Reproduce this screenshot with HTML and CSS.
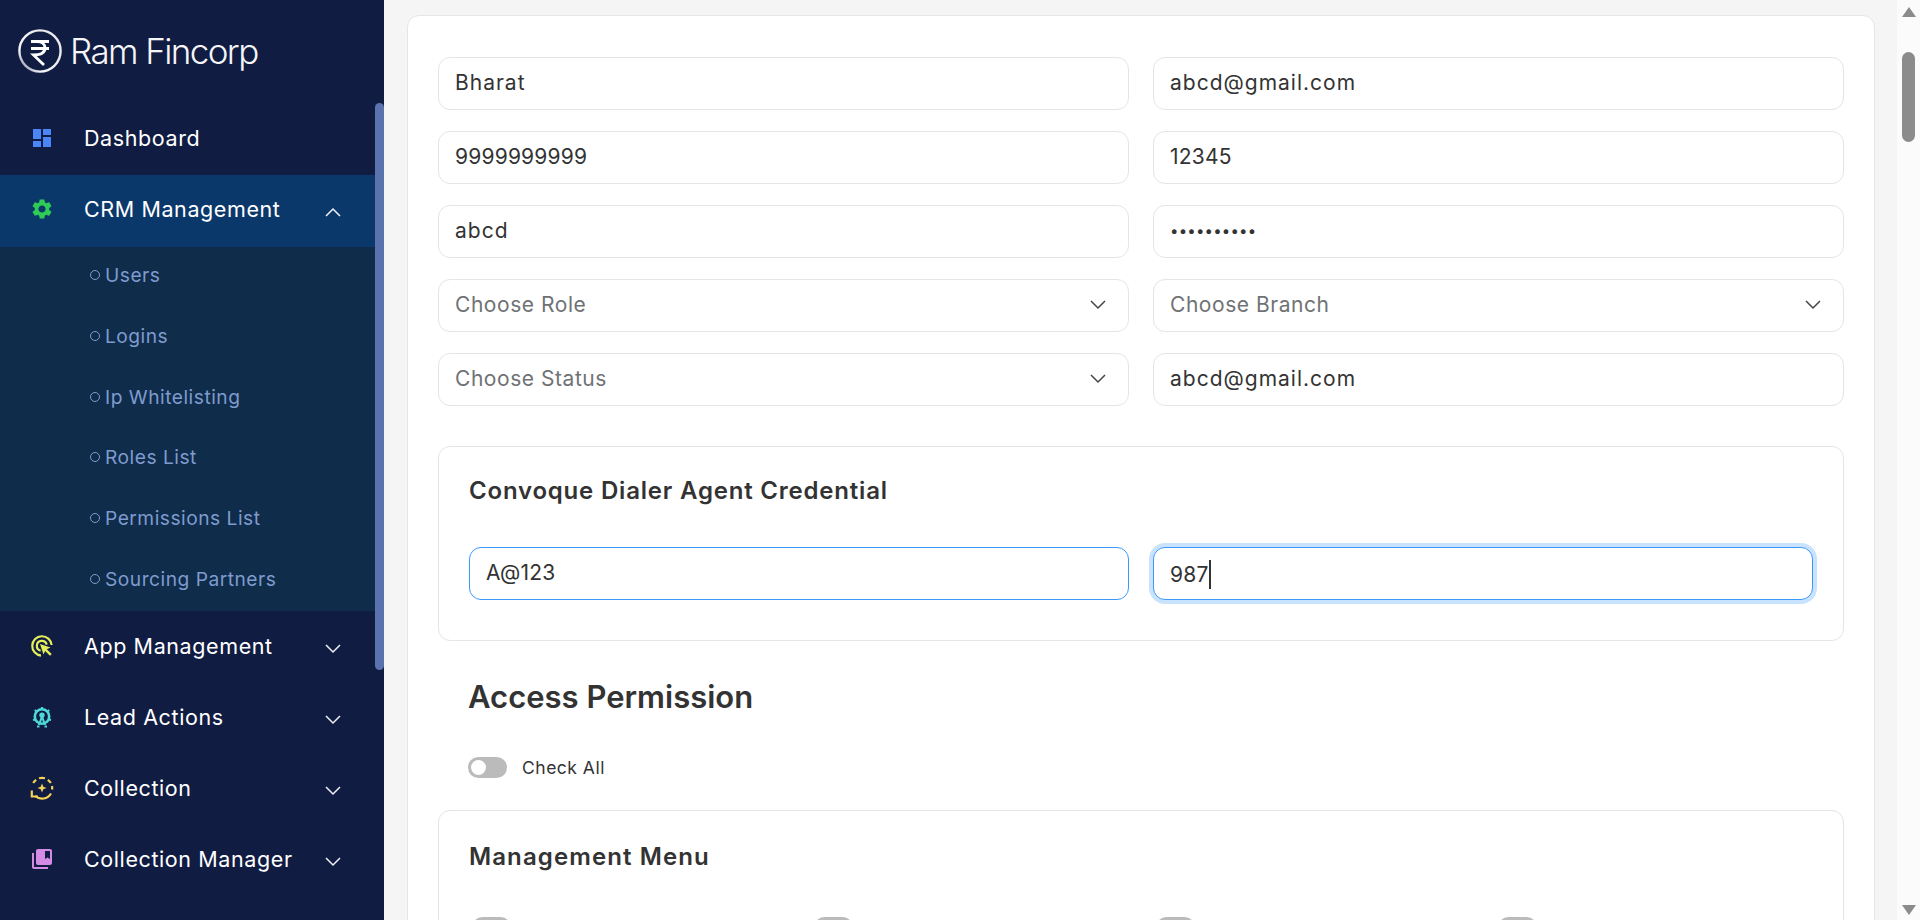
FILE: index.html
```html
<!DOCTYPE html>
<html lang="en">
<head>
<meta charset="utf-8">
<title>Ram Fincorp</title>
<link rel="stylesheet" href="styles.css">
</head>
<body>
<div class="app">
  <aside class="sidebar">
    <div class="side-col">
      <div class="brand">
        <svg class="brand-mark" width="46" height="46" viewBox="0 0 46 46" aria-hidden="true">
          <defs><linearGradient id="ring" x1="0" y1="1" x2="1" y2="0"><stop offset="0" stop-color="#5b6480"/><stop offset=".25" stop-color="#f4f4f6"/><stop offset="1" stop-color="#e6e6ea"/></linearGradient></defs>
          <circle cx="23" cy="23" r="20.600" fill="none" stroke="url(#ring)" stroke-width="2.400"/>
          <path d="M14 13.500H32M14 20.500H32M20 13.500C25 13.500 28 16 28 20C28 24.500 24.500 27 16.500 27L27 37" fill="none" stroke="#fff" stroke-width="2.800"/>
        </svg>
        <span class="brand-name">Ram Fincorp</span>
      </div>
      <nav>
        <a class="nav-row">
          <svg class="nav-ico ico-blue" viewBox="0 0 24 24"><path d="M3 13h8V3H3v10zm0 8h8v-6H3v6zm10 0h8V11h-8v10zm0-18v6h8V3h-8z"/></svg>
          <span class="nav-text">Dashboard</span>
        </a>
        <a class="nav-row nav-active">
          <svg class="nav-ico ico-green" viewBox="0 0 24 24"><path d="M19.14 12.94c.04-.3.06-.61.06-.94 0-.32-.02-.64-.07-.94l2.03-1.58c.18-.14.23-.41.12-.61l-1.92-3.32c-.12-.22-.37-.29-.59-.22l-2.39.96c-.5-.38-1.03-.7-1.62-.94l-.36-2.54c-.04-.24-.24-.41-.48-.41h-3.84c-.24 0-.43.17-.47.41l-.36 2.54c-.59.24-1.13.57-1.62.94l-2.39-.96c-.22-.08-.47 0-.59.22L2.74 8.87c-.12.21-.08.47.12.61l2.03 1.58c-.05.3-.09.63-.09.94s.02.64.07.94l-2.03 1.58c-.18.14-.23.41-.12.61l1.92 3.32c.12.22.37.29.59.22l2.39-.96c.5.38 1.03.7 1.62.94l.36 2.54c.05.24.24.41.48.41h3.84c.24 0 .44-.17.47-.41l.36-2.54c.59-.24 1.13-.56 1.62-.94l2.39.96c.22.08.47 0 .59-.22l1.92-3.32c.12-.22.07-.47-.12-.61l-2.01-1.58zM12 15.6c-1.98 0-3.6-1.62-3.6-3.6s1.62-3.6 3.6-3.6 3.6 1.62 3.6 3.6-1.62 3.6-3.6 3.6z"/></svg>
          <span class="nav-text">CRM Management</span>
          <svg class="nav-chev" viewBox="0 0 16 10"><path d="M1 9L8 2L15 9"/></svg>
        </a>
        <ul class="sub-list">
          <li class="sub-item">Users</li>
          <li class="sub-item">Logins</li>
          <li class="sub-item">Ip Whitelisting</li>
          <li class="sub-item">Roles List</li>
          <li class="sub-item">Permissions List</li>
          <li class="sub-item">Sourcing Partners</li>
        </ul>
        <a class="nav-row">
          <svg class="nav-ico ico-stroke ico-yellow" viewBox="0 0 24 24"><path d="M11 21.600A9.700 9.700 0 1 1 21.600 11"/><path d="M10.600 16.700A5 5 0 1 1 16.700 10.600"/><path class="ico-fill" d="M10 10L20.500 13.500L16.800 15.200L21.700 20.100L20 21.800L15.100 16.900L13.500 20.500Z"/></svg>
          <span class="nav-text">App Management</span>
          <svg class="nav-chev" viewBox="0 0 16 10"><path d="M1 1L8 8L15 1"/></svg>
        </a>
        <a class="nav-row">
          <svg class="nav-ico ico-stroke ico-cyan" viewBox="0 0 24 24"><circle cx="12" cy="11.500" r="7.200" stroke-width="2.600"/><path class="ico-fill" d="M12 7.500a2.700 2.700 0 0 1 2.700 2.700c0 1-.5 1.800-1.200 2.300L16 20h-2.200l-1.800-5.500L10.200 20H8l2.500-7.500c-.7-.5-1.200-1.300-1.200-2.300A2.700 2.700 0 0 1 12 7.500Z"/><path d="M12 2V4.500M4.800 5L6.500 6.500M19.200 5L17.500 6.500M3 15L5.500 14.500M21 15L18.500 14.500M7 21.500H9.500M14.500 21.500H17"/></svg>
          <span class="nav-text">Lead Actions</span>
          <svg class="nav-chev" viewBox="0 0 16 10"><path d="M1 1L8 8L15 1"/></svg>
        </a>
        <a class="nav-row">
          <svg class="nav-ico ico-stroke ico-gold" viewBox="0 0 24 24"><path d="M9 2.300A10.300 10.300 0 0 1 15 2.300"/><path d="M17.800 3.800A10.300 10.300 0 0 1 20.800 7"/><path d="M3.200 7A10.300 10.300 0 0 1 6.200 3.800"/><path d="M22 10A10.300 10.300 0 0 1 22.100 13.500"/><path d="M21 17.500A10.300 10.300 0 0 1 5.200 20"/><path d="M1.800 14.500V20.500H8"/><path class="ico-fill" d="M12 7.500L13.300 10.700L16.500 12L13.300 13.300L12 16.500L10.700 13.300L7.500 12L10.700 10.700Z"/></svg>
          <span class="nav-text">Collection</span>
          <svg class="nav-chev" viewBox="0 0 16 10"><path d="M1 1L8 8L15 1"/></svg>
        </a>
        <a class="nav-row">
          <svg class="nav-ico ico-purple" viewBox="0 0 24 24"><path d="M4 6H2v14c0 1.100.9 2 2 2h14v-2H4V6zm16-4H8c-1.100 0-2 .9-2 2v12c0 1.100.9 2 2 2h12c1.100 0 2-.9 2-2V4c0-1.100-.9-2-2-2zm0 10l-2.500-1.500L15 12V4h5v8z"/></svg>
          <span class="nav-text">Collection Manager</span>
          <svg class="nav-chev" viewBox="0 0 16 10"><path d="M1 1L8 8L15 1"/></svg>
        </a>
      </nav>
    </div>
    <div class="side-rail"><div class="side-thumb"></div></div>
  </aside>

  <main class="main">
    <section class="card">
      <div class="field-grid">
        <input class="field" type="text" value="Bharat">
        <input class="field" type="text" value="abcd@gmail.com">
        <input class="field field-num" type="text" value="9999999999">
        <input class="field field-num" type="text" value="12345">
        <input class="field" type="text" value="abcd">
        <input class="field field-dots" type="password" value="abcdefghij">
        <div class="select-wrap">
          <select class="field field-select"><option>Choose Role</option></select>
          <svg class="select-chev" viewBox="0 0 16 10"><path d="M1 1L8 8L15 1"/></svg>
        </div>
        <div class="select-wrap">
          <select class="field field-select"><option>Choose Branch</option></select>
          <svg class="select-chev" viewBox="0 0 16 10"><path d="M1 1L8 8L15 1"/></svg>
        </div>
        <div class="select-wrap">
          <select class="field field-select"><option>Choose Status</option></select>
          <svg class="select-chev" viewBox="0 0 16 10"><path d="M1 1L8 8L15 1"/></svg>
        </div>
        <input class="field" type="text" value="abcd@gmail.com">
      </div>

      <section class="panel panel-dialer">
        <h3 class="panel-title">Convoque Dialer Agent Credential</h3>
        <div class="field-grid">
          <input class="field field-blue field-num" type="text" value="A@123">
          <div class="field field-blue field-focus field-num"><span class="caret-text">987</span></div>
        </div>
      </section>

      <h2 class="section-title">Access Permission</h2>
      <div class="check-all">
        <span class="toggle"></span>
        <span class="check-label">Check All</span>
      </div>

      <section class="panel panel-menu">
        <h3 class="panel-title">Management Menu</h3>
        <div class="toggle-row">
          <span class="toggle"></span>
          <span class="toggle"></span>
          <span class="toggle"></span>
          <span class="toggle"></span>
        </div>
      </section>
    </section>
  </main>

  <div class="page-scroll" aria-hidden="true">
    <span class="arrow-up"></span>
    <span class="page-thumb"></span>
    <span class="arrow-down"></span>
  </div>
</div>
</body>
</html>
```

FILE: styles.css
```css
* { box-sizing: border-box; }
html, body { margin: 0; height: 100%; overflow: hidden; }
body {
  font-family: Inter, "Noto Sans", "Liberation Sans", sans-serif;
  color: #333;
  background: #f5f5f5;
}
.app { display: flex; height: 920px; overflow: hidden; }

/* Sidebar */
.sidebar { width: 384px; flex: none; display: flex; background: #101c42; }
.side-col { width: 375px; flex: none; }
.side-rail { width: 9px; flex: none; padding-top: 103px; }
.side-thumb { height: 567px; background: #5a72ae; border-radius: 5px; }
.brand { height: 104px; display: flex; align-items: center; padding: 0 0 2px 17px; gap: 7px; }
.brand-mark { flex: none; }
.brand-name { color: #f5f5f7; font-size: 35px; font-weight: 300; letter-spacing: -1.6px; }

.nav-row { display: flex; align-items: center; height: 71.3px; padding: 0 0 3px 30px; color: #fff; }
.nav-active { background: #0a386b; }
.nav-ico { width: 24px; height: 24px; flex: none; }
.ico-blue { fill: #4a86f7; }
.ico-green { fill: #2ecc55; }
.ico-purple { fill: #d58ae6; }
.ico-stroke { fill: none; stroke-width: 2.200; }
.ico-stroke .ico-fill { stroke: none; }
.ico-yellow { stroke: #e3ee5a; }
.ico-yellow .ico-fill { fill: #e3ee5a; }
.ico-cyan { stroke: #4fd8d8; }
.ico-cyan .ico-fill { fill: #4fd8d8; }
.ico-gold { stroke: #f6d355; }
.ico-gold .ico-fill { fill: #f6d355; }
.nav-text { flex: 1; margin-left: 30px; font-size: 21.500px; letter-spacing: .6px; }
.nav-chev { width: 16px; height: 10px; flex: none; margin: 6px 34px 0 0; fill: none; stroke: #f0f2f8; stroke-width: 1.500; }

.sub-list { list-style: none; margin: 0; padding: 0; height: 364.800px; background: #0f2c4a; }
.sub-item { height: 60.800px; display: flex; align-items: center; padding: 0 0 4px 90px; color: #7f9bcf; font-size: 19.200px; letter-spacing: .5px; }
.sub-item::before { content: ""; width: 8px; height: 8px; border: 1.300px solid #7f9bcf; border-radius: 50%; margin-right: 5px; }

/* Main */
.main { flex: 1; min-width: 0; padding: 15px 22px 0 23px; }
.card {
  background: #fff;
  border: 1px solid #e5e5e5;
  border-radius: 12px;
  padding: 41px 30px 0;
  min-height: 920px;
}
.field-grid { display: grid; grid-template-columns: 1fr 1fr; column-gap: 24px; row-gap: 21px; }
.field {
  display: block;
  width: 100%;
  height: 53px;
  padding: 0 16px 2px;
  border: 1px solid #e5e5e5;
  border-radius: 12px;
  background: #fff;
  color: #333;
  font: 400 21px/49px Inter, "Noto Sans", sans-serif;
  letter-spacing: 1px;
  outline: none;
}
.field-num { letter-spacing: .2px; }
.field-dots { font-size: 15px; letter-spacing: .2px; }
.select-wrap { position: relative; }
.field-select { appearance: none; -webkit-appearance: none; color: #6f7275; letter-spacing: .55px; }
.select-chev { position: absolute; right: 23px; top: 21px; width: 16px; height: 10px; fill: none; stroke: #444; stroke-width: 1.500; pointer-events: none; }
.field-blue { border-color: #3b99fc; }
.field-focus { box-shadow: 0 0 0 4px #c9e2fd; }
.caret-text { display: inline-block; height: 29px; line-height: 29px; border-right: 2px solid #333; vertical-align: middle; }

.panel { border: 1px solid #e5e5e5; border-radius: 12px; padding: 0 30px; }
.panel-dialer { height: 195px; margin-top: 40px; padding-top: 29px; }
.panel-title { margin: 0 0 45px; font-size: 24px; line-height: 30px; font-weight: 600; letter-spacing: .8px; color: #333; }
.panel-dialer .panel-title { margin-bottom: 41px; }
.panel-menu .panel-title { letter-spacing: 1.100px; }
.section-title { margin: 35px 0 0 30px; font-size: 31px; line-height: 42px; font-weight: 600; color: #333; }
.check-all { display: flex; align-items: center; gap: 15px; margin: 37px 0 0 30px; height: 24px; }
.check-label { font-size: 17.500px; letter-spacing: .5px; color: #333; }
.toggle { display: block; width: 39px; height: 21px; flex: none; border-radius: 11px; background: #bbb; position: relative; }
.toggle::after { content: ""; position: absolute; left: 3px; top: 3px; width: 15px; height: 15px; border-radius: 50%; background: #fff; }
.panel-menu { margin-top: 31px; padding-top: 31px; min-height: 300px; }
.toggle-row { display: flex; margin-left: 3px; gap: 303px; }

/* Page scrollbar */
.page-scroll { width: 23px; flex: none; background: #fbfbfb; display: flex; flex-direction: column; align-items: center; padding-top: 7px; padding-bottom: 5px; }
.arrow-up { width: 0; height: 0; border: 7px solid transparent; border-top: 0; border-bottom: 10px solid #8b8b8b; }
.page-thumb { width: 13px; height: 90px; margin-top: 35px; border-radius: 7px; background: #8b8b8b; }
.arrow-down { width: 0; height: 0; margin-top: auto; border: 7px solid transparent; border-bottom: 0; border-top: 10px solid #8b8b8b; }
```
